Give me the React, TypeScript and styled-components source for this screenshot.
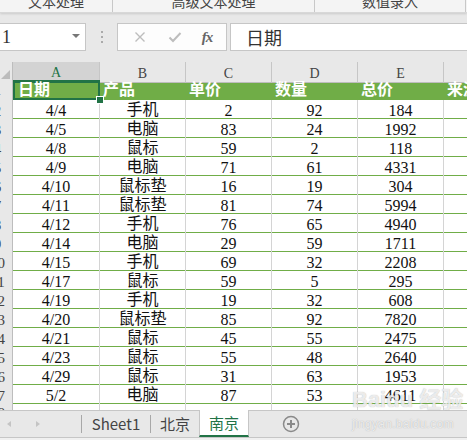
import React from "react"
import styled, { createGlobalStyle } from "styled-components"

const GlobalStyle = createGlobalStyle`
	html, body {
		margin: 0;
		padding: 0;
		width: 467px;
		height: 440px;
		overflow: hidden;
		background: #e8e8e8;
	}
	* {
		box-sizing: border-box;
	}
`

const CJK = `"Noto Sans CJK SC", "Noto Sans", sans-serif`
const SERIF = `"Liberation Serif", "Noto Sans CJK SC", serif`
const GREEN = "#70ad47"
const DARK_GREEN = "#217346"
const GRID = "#d4d4d4"
const COLS = "13px 87px 86px 86px 86px 86px 86px"

const Page = styled.div`
	position: relative;
	width: 467px;
	height: 440px;
	overflow: hidden;
	display: flex;
	flex-direction: column;
	background: #e8e8e8;
`

const Ribbon = styled.div`
	height: 13px;
	flex: none;
	display: flex;
	background: #f4f4f4;
	border-bottom: 1px solid #d8d8d8;
	box-shadow: 0 1px 2px rgba(0, 0, 0, 0.12);
	overflow: hidden;
`

const RibbonGroup = styled.div<{ w: number }>`
	width: ${(p) => p.w}px;
	flex: none;
	border-right: 1px solid #c8c8c8;
	text-align: center;
	font-family: ${CJK};
	font-size: 14px;
	line-height: 14px;
	color: #444;
	span {
		display: block;
		margin-top: -6px;
	}
`

const FormulaRow = styled.div`
	height: 49px;
	flex: none;
	display: flex;
	align-items: flex-start;
	padding-top: 10px;
`

const NameBox = styled.div`
	width: 86px;
	height: 28px;
	flex: none;
	background: #fff;
	border: 1px solid #c6c6c6;
	border-left: none;
	display: flex;
	align-items: center;
	justify-content: space-between;
	padding: 0 5px 0 2px;
	font-family: ${SERIF};
	font-size: 18px;
	color: #333;
`

const DropArrow = styled.div`
	width: 0;
	height: 0;
	border-left: 4px solid transparent;
	border-right: 4px solid transparent;
	border-top: 4px solid #777;
	margin-bottom: 2px;
`

const Grip = styled.div`
	width: 31px;
	height: 28px;
	flex: none;
	display: flex;
	flex-direction: column;
	align-items: center;
	justify-content: center;
	gap: 3px;
	i {
		width: 2px;
		height: 2px;
		background: #aaa;
		display: block;
	}
`

const ButtonBox = styled.div`
	width: 110px;
	height: 28px;
	flex: none;
	background: #fdfdfd;
	border: 1px solid #c6c6c6;
	display: grid;
	grid-template-columns: 36px 34px 1fr;
	align-items: center;
	justify-items: center;
	padding-left: 4px;
	padding-right: 4px;
	margin-right: 3px;
`

const Fx = styled.span`
	font-family: ${SERIF};
	font-style: italic;
	font-size: 15px;
	color: #666;
	font-weight: bold;
	letter-spacing: -1px;
`

const FormulaInput = styled.div`
	flex: 1;
	height: 28px;
	background: #fff;
	border: 1px solid #c6c6c6;
	border-right: none;
	padding-left: 15px;
	display: flex;
	align-items: center;
	font-family: ${CJK};
	font-size: 18px;
	color: #333;
`

const Sheet = styled.div`
	flex: none;
	height: 348px;
	background: #fff;
	overflow: hidden;
	position: relative;
`

const GridRow = styled.div<{ h: number; line?: string; bg?: string }>`
	display: grid;
	grid-template-columns: ${COLS};
	width: 530px;
	height: ${(p) => p.h}px;
	border-bottom: 1px solid ${(p) => p.line ?? "transparent"};
	background: ${(p) => p.bg ?? "#fff"};
`

const ColHead = styled.div<{ active?: boolean }>`
	background: ${(p) => (p.active ? "#d3d3d3" : "#e8e8e8")};
	border-right: 1px solid #c6c6c6;
	border-bottom: ${(p) => (p.active ? `2px solid ${DARK_GREEN}` : "1px solid #bdbdbd")};
	color: ${(p) => (p.active ? DARK_GREEN : "#444")};
	font-family: ${SERIF};
	font-size: 14px;
	display: flex;
	align-items: center;
	justify-content: center;
	padding-top: 3px;
`

const Corner = styled.div`
	background: #e8e8e8;
	border-right: 1px solid #bdbdbd;
	border-bottom: 1px solid #bdbdbd;
	display: flex;
	align-items: flex-end;
	justify-content: flex-end;
	padding: 0 2px 3px 0;
`

const RowHead = styled.div`
	background: #e8e8e8;
	border-right: 1px solid #bdbdbd;
	overflow: hidden;
	display: flex;
	align-items: center;
	span {
		flex: none;
		width: 24px;
		margin-left: -14.5px;
		text-align: center;
		font-family: ${SERIF};
		font-size: 15px;
		line-height: 1;
		color: #444;
	}
`

const HeadCell = styled.div<{ selected?: boolean }>`
	position: relative;
	color: #fff;
	font-family: ${CJK};
	font-weight: 700;
	font-size: 16px;
	line-height: 1;
	display: flex;
	align-items: center;
	padding-left: ${(p) => (p.selected ? 5 : 3)}px;
	padding-bottom: 4px;
	white-space: nowrap;
	box-shadow: ${(p) => (p.selected ? `inset 0 0 0 2px ${DARK_GREEN}` : "none")};
`

const FillHandle = styled.div`
	position: absolute;
	right: -3px;
	bottom: -3px;
	width: 6px;
	height: 6px;
	background: ${DARK_GREEN};
	outline: 1px solid #fff;
	z-index: 2;
`

const Cell = styled.div<{ cjk?: boolean }>`
	border-right: 1px solid ${GRID};
	display: flex;
	align-items: center;
	justify-content: center;
	font-family: ${(p) => (p.cjk ? CJK : SERIF)};
	font-size: 16px;
	line-height: 1;
	color: #111;
	white-space: nowrap;
	padding-bottom: ${(p) => (p.cjk ? "6px" : "1px")};
`

const TabBar = styled.div`
	flex: none;
	height: 27px;
	display: flex;
	align-items: stretch;
	background: #e8e8e8;
	border-top: 1px solid #c6c6c6;
`

const NavArrows = styled.div`
	width: 81px;
	flex: none;
	display: flex;
	align-items: center;
	padding-left: 7px;
	gap: 25px;
`

const Arrow = styled.div<{ dir: "l" | "r" }>`
	width: 0;
	height: 0;
	border-top: 3px solid transparent;
	border-bottom: 3px solid transparent;
	${(p) => (p.dir === "l" ? "border-right: 4px solid #c4c4c4;" : "border-left: 4px solid #c4c4c4;")}
`

const TabSep = styled.div`
	width: 1px;
	flex: none;
	background: #a8a8a8;
	margin: 4px 0 4px;
`

const Tab = styled.div<{ active?: boolean; w: number }>`
	width: ${(p) => p.w}px;
	flex: none;
	display: flex;
	align-items: center;
	justify-content: center;
	font-family: ${CJK};
	font-size: 15px;
	color: ${(p) => (p.active ? DARK_GREEN : "#444")};
	background: ${(p) => (p.active ? "#fff" : "transparent")};
	margin-top: ${(p) => (p.active ? "-1px" : "0")};
	border-left: ${(p) => (p.active ? "1px solid #c6c6c6" : "none")};
	border-right: ${(p) => (p.active ? "1px solid #c6c6c6" : "none")};
	border-bottom: ${(p) => (p.active ? `2px solid ${DARK_GREEN}` : "2px solid transparent")};
`

const AddSheet = styled.div`
	margin-left: 33px;
	display: flex;
	align-items: center;
`

const BottomStrip = styled.div`
	flex: 1;
	background: #f0f0f0;
	border-top: 1px solid #c6c6c6;
`

const Watermark = styled.div`
	position: absolute;
	left: 352px;
	top: 389px;
	color: rgba(255, 255, 255, 0.75);
	text-shadow: 0 0 1px rgba(120, 120, 120, 0.6);
	pointer-events: none;
	z-index: 5;
	line-height: 1;
	b {
		display: block;
		font-family: "Liberation Sans", ${CJK};
		font-size: 22px;
		font-weight: 700;
	}
	small {
		display: block;
		margin-top: 7px;
		font-family: "Liberation Sans", sans-serif;
		font-size: 12px;
		letter-spacing: 0.3px;
	}
`

type Row = [string, string, number, number, number]

const rows: Row[] = [
	["4/4", "手机", 2, 92, 184],
	["4/5", "电脑", 83, 24, 1992],
	["4/8", "鼠标", 59, 2, 118],
	["4/9", "电脑", 71, 61, 4331],
	["4/10", "鼠标垫", 16, 19, 304],
	["4/11", "鼠标垫", 81, 74, 5994],
	["4/12", "手机", 76, 65, 4940],
	["4/14", "电脑", 29, 59, 1711],
	["4/15", "手机", 69, 32, 2208],
	["4/17", "鼠标", 59, 5, 295],
	["4/19", "手机", 19, 32, 608],
	["4/20", "鼠标垫", 85, 92, 7820],
	["4/21", "鼠标", 45, 55, 2475],
	["4/23", "鼠标", 55, 48, 2640],
	["4/29", "鼠标", 31, 63, 1953],
	["5/2", "电脑", 87, 53, 4611],
]

const headers = ["日期", "产品", "单价", "数量", "总价", "来源"]
const letters = ["A", "B", "C", "D", "E", "F"]

export default function App() {
	return (
		<Page>
			<GlobalStyle />
			<Ribbon>
				<RibbonGroup w={113}>
					<span>文本处理</span>
				</RibbonGroup>
				<RibbonGroup w={202}>
					<span>高级文本处理</span>
				</RibbonGroup>
				<RibbonGroup w={151}>
					<span>数值录入</span>
				</RibbonGroup>
			</Ribbon>

			<FormulaRow>
				<NameBox>
					<span>1</span>
					<DropArrow />
				</NameBox>
				<Grip>
					<i />
					<i />
					<i />
				</Grip>
				<ButtonBox>
					<svg width="12" height="12" viewBox="0 0 12 12">
						<path d="M1.5 1.5 L10.5 10.5 M10.5 1.5 L1.5 10.5" stroke="#bdbdbd" strokeWidth="1.4" fill="none" />
					</svg>
					<svg width="14" height="12" viewBox="0 0 14 12">
						<path d="M1.5 6.5 L5 10 L12.5 2" stroke="#bdbdbd" strokeWidth="2" fill="none" />
					</svg>
					<Fx>fx</Fx>
				</ButtonBox>
				<FormulaInput>日期</FormulaInput>
			</FormulaRow>

			<Sheet>
				<GridRow h={18}>
					<Corner>
						<svg width="9" height="9" viewBox="0 0 9 9">
							<path d="M9 0 L9 9 L0 9 Z" fill="#bcbcbc" />
						</svg>
					</Corner>
					{letters.map((l, i) => (
						<ColHead key={l} active={i === 0}>
							{l}
						</ColHead>
					))}
				</GridRow>

				<GridRow h={20} bg={GREEN}>
					<RowHead>
						<span>1</span>
					</RowHead>
					{headers.map((h, i) => (
						<HeadCell key={h} selected={i === 0}>
							{h}
							{i === 0 && <FillHandle />}
						</HeadCell>
					))}
				</GridRow>

				{rows.map((r, i) => (
					<GridRow key={i} h={19} line={GREEN}>
						<RowHead>
							<span>{i + 2}</span>
						</RowHead>
						<Cell>{r[0]}</Cell>
						<Cell cjk>{r[1]}</Cell>
						<Cell>{r[2]}</Cell>
						<Cell>{r[3]}</Cell>
						<Cell>{r[4]}</Cell>
						<Cell />
					</GridRow>
				))}

				<GridRow h={19}>
					<RowHead>
						<span>18</span>
					</RowHead>
					<Cell />
					<Cell />
					<Cell />
					<Cell />
					<Cell />
					<Cell />
				</GridRow>
			</Sheet>

			<TabBar>
				<NavArrows>
					<Arrow dir="l" />
					<Arrow dir="r" />
				</NavArrows>
				<TabSep />
				<Tab w={68}>Sheet1</Tab>
				<TabSep />
				<Tab w={48}>北京</Tab>
				<Tab w={50} active>
					南京
				</Tab>
				<AddSheet>
					<svg width="18" height="18" viewBox="0 0 18 18">
						<circle cx="9" cy="9" r="7.5" stroke="#8a8a8a" strokeWidth="1.5" fill="none" />
						<path d="M9 5 V13 M5 9 H13" stroke="#8a8a8a" strokeWidth="2" />
					</svg>
				</AddSheet>
			</TabBar>
			<BottomStrip />

			<Watermark>
				<b>Baidu 经验</b>
				<small>jingyan.baidu.com</small>
			</Watermark>
		</Page>
	)
}
